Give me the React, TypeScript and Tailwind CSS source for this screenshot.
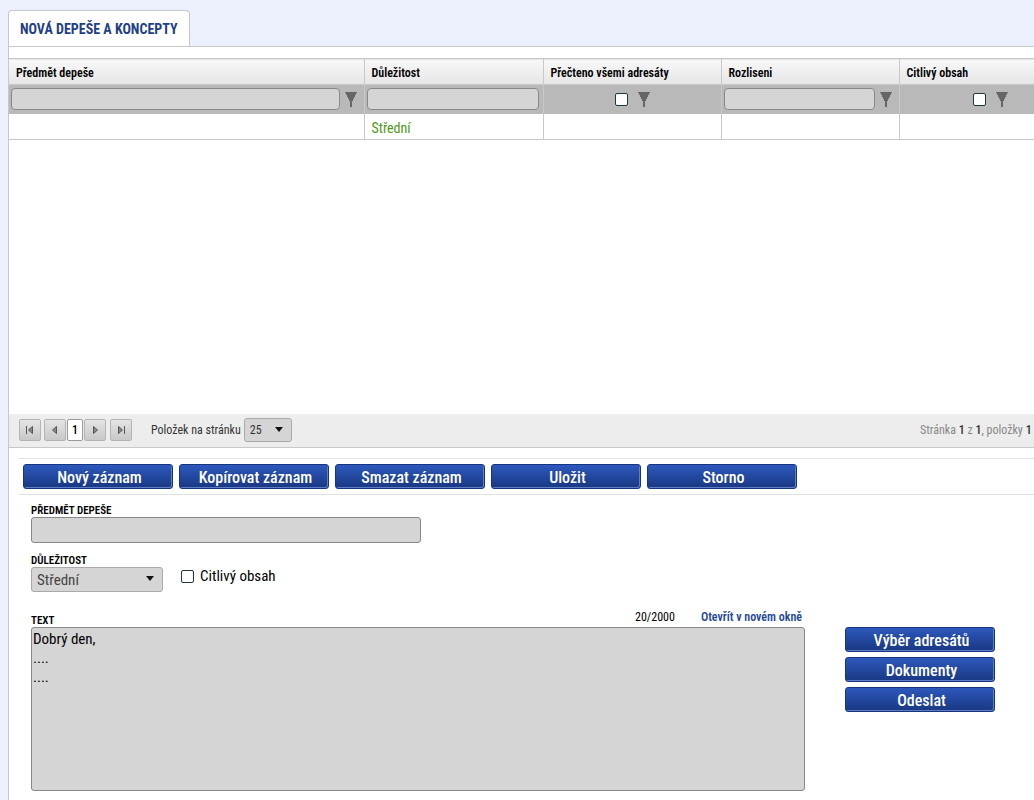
import { useState } from "react";
import type { ReactNode } from "react";

function FilterIcon({ label }: { label: string }) {
  return (
    <button type="button" aria-label={label} className="shrink-0 cursor-pointer">
      <svg width="12" height="15" viewBox="0 0 12 15" fill="#666" shapeRendering="crispEdges" aria-hidden="true">
        <path d="M0 0h12v1h-1v2h-1v2H9v2H8v2H7v6H5V9H4V7H3V5H2V3H1V1H0z" />
      </svg>
    </button>
  );
}

function Check({ id, label }: { id?: string; label?: string }) {
  return (
    <input
      id={id}
      aria-label={label}
      type="checkbox"
      className="size-[13px] shrink-0 appearance-none rounded-[2px] border border-[#1d3740] bg-white checked:bg-[#1f4297]"
    />
  );
}

function ActionButton({ children }: { children: ReactNode }) {
  return (
    <button
      type="button"
      className="h-[25px] w-[150px] cursor-pointer rounded-[3px] border border-[#17357f] bg-linear-to-b from-[#2d58bd] to-[#193883] pt-0.5 pl-[3px] text-center text-base leading-[21px] font-medium text-white shadow-[inset_-1px_-1px_0_#5f7dc4]"
    >
      {children}
    </button>
  );
}

function PagerButton({ label, path, bar }: { label: string; path: string; bar?: string }) {
  return (
    <button
      type="button"
      aria-label={label}
      className="flex size-[22px] items-center justify-center rounded-[2px] border border-[#b4b4b4] bg-linear-to-b from-[#e4e4e4] to-[#c8c8c8]"
    >
      <svg width="10" height="10" viewBox="0 0 10 10" aria-hidden="true">
        <path d={path} fill="#888" stroke="#555" strokeWidth="1" />
        {bar && <path d={bar} stroke="#555" strokeWidth="1" />}
      </svg>
    </button>
  );
}

function Caret() {
  return (
    <svg width="8" height="5" viewBox="0 0 8 5" fill="#111" aria-hidden="true" className="pointer-events-none col-start-1 row-start-1 mr-[9px] mb-0.5 self-center justify-self-end">
      <path d="M0 0h8L4 5z" />
    </svg>
  );
}

const columns = ["Předmět depeše", "Důležitost", "Přečteno všemi adresáty", "Rozliseni", "Citlivý obsah"];
const filterInput = "h-[22px] w-full min-w-0 rounded-[4px] border border-[#888] bg-[#d5d5d5] px-1 text-sm";
const fieldLabel = "block pt-px text-[11px] leading-[13px] font-semibold text-black uppercase";

export default function App() {
  const [text, setText] = useState("Dobrý den,\n....\n....");

  return (
    <div className="min-h-screen overflow-x-hidden bg-[#ecf0fc] pt-2.5 pl-2 font-['Roboto_Condensed','Roboto',sans-serif] text-sm text-black">
      <div role="tablist" className="flex">
        <button
          type="button"
          role="tab"
          aria-selected="true"
          className="h-9 rounded-t-[4px] border border-b-0 border-[#c8c8c8] bg-white px-[11px] pt-px text-sm leading-[34px] font-bold text-[#1f3f87] uppercase"
        >
          Nová depeše a koncepty
        </button>
      </div>

      <main className="min-h-[calc(100vh-46px)] overflow-hidden border-t border-l border-[#c8c8c8] bg-white pt-[11px]">
        <div className="min-w-[1073px]">
          <div className="min-h-[356px]">
            <table className="w-full table-fixed border-collapse">
              <colgroup>
                <col className="w-[355px]" />
                <col className="w-[179px]" />
                <col className="w-[178px]" />
                <col className="w-[178px]" />
                <col />
              </colgroup>
              <thead>
                <tr className="h-[26px] border-y border-[#c8c8c8] bg-linear-to-b from-[#f8f8f8] to-[#e6e6e6]">
                  {columns.map((c) => (
                    <th key={c} scope="col" className="border-r border-[#c8c8c8] px-[7px] pt-0.5 text-left text-xs leading-4 font-semibold">
                      {c}
                    </th>
                  ))}
                </tr>
                <tr className="h-[29px] bg-[#b9b9b9]">
                  <td className="border-r border-[#c8c8c8] pr-[7px] pl-0.5">
                    <div className="flex items-center gap-[5px]">
                      <input aria-label="Filtr Předmět depeše" className={filterInput} />
                      <FilterIcon label="Filtrovat předmět" />
                    </div>
                  </td>
                  <td className="border-r border-[#c8c8c8] pr-1 pl-0.5">
                    <div className="flex">
                      <input aria-label="Filtr Důležitost" className={filterInput} />
                    </div>
                  </td>
                  <td className="border-r border-[#c8c8c8] pl-px">
                    <div className="flex items-center justify-center gap-2.5">
                      <Check label="Přečteno všemi adresáty" />
                      <FilterIcon label="Filtrovat přečtené" />
                    </div>
                  </td>
                  <td className="border-r border-[#c8c8c8] pr-[7px] pl-0.5">
                    <div className="flex items-center gap-[5px]">
                      <input aria-label="Filtr Rozliseni" className={filterInput} />
                      <FilterIcon label="Filtrovat rozlišení" />
                    </div>
                  </td>
                  <td className="border-r border-[#c8c8c8] pl-px">
                    <div className="flex items-center justify-center gap-2.5">
                      <Check label="Citlivý obsah" />
                      <FilterIcon label="Filtrovat citlivý obsah" />
                    </div>
                  </td>
                </tr>
              </thead>
              <tbody>
                <tr className="h-[26px] border-b border-[#c8c8c8]">
                  <td className="border-r border-[#c8c8c8]" />
                  <td className="border-r border-[#c8c8c8] px-[7px] pt-1 leading-5 text-[#4d9a1a]">Střední</td>
                  <td className="border-r border-[#c8c8c8]" />
                  <td className="border-r border-[#c8c8c8]" />
                  <td className="border-r border-[#c8c8c8]" />
                </tr>
              </tbody>
            </table>
          </div>

          <div className="flex h-[34px] items-center border-b border-[#c8c8c8] bg-[#ededed] pr-2.5 pb-px pl-2.5 text-xs text-[#333]">
            <nav aria-label="Stránkování" className="flex items-center">
              <PagerButton label="První stránka" path="M7.5 1.5v7L3.5 5z" bar="M1.5 1v8" />
              <span className="w-[3px]" />
              <PagerButton label="Předchozí stránka" path="M6.5 1.5v7L2.5 5z" />
              <button type="button" aria-current="page" className="mx-px h-[22px] w-4 rounded-[2px] border border-[#999] bg-white text-center font-medium text-black">
                1
              </button>
              <PagerButton label="Další stránka" path="M3.5 1.5v7L7.5 5z" />
              <span className="w-1" />
              <PagerButton label="Poslední stránka" path="M2.5 1.5v7L6.5 5z" bar="M8.5 1v8" />
            </nav>
            <label htmlFor="page-size" className="ml-[19px]">Položek na stránku</label>
            <div className="ml-[3px] grid">
              <select id="page-size" defaultValue="25" className="col-start-1 row-start-1 h-6 w-12 appearance-none rounded-[3px] border border-[#aaa] bg-[#d5d5d5] pl-[5px] text-xs">
                <option>25</option>
                <option>50</option>
              </select>
              <Caret />
            </div>
            <p className="ml-auto w-[152px] whitespace-nowrap text-[#888]">
              Stránka <b className="font-medium text-[#333]">1</b> z <b className="font-medium text-[#333]">1</b>, položky{" "}
              <b className="font-medium text-[#333]">1</b> až 1 z 1
            </p>
          </div>
        </div>

        <div className="mt-2.5 ml-2.5 flex gap-1.5 border-y border-[#e2e2e2] px-1 py-[5px]">
          <ActionButton>Nový záznam</ActionButton>
          <ActionButton>Kopírovat záznam</ActionButton>
          <ActionButton>Smazat záznam</ActionButton>
          <ActionButton>Uložit</ActionButton>
          <ActionButton>Storno</ActionButton>
        </div>

        <form className="px-[22px] pt-2" onSubmit={(e) => e.preventDefault()}>
          <label htmlFor="subject" className={fieldLabel}>Předmět depeše</label>
          <input id="subject" className="block h-[26px] w-[390px] rounded-[3px] border border-[#888] bg-[#d5d5d5] px-1 text-base" />

          <div className="mt-2.5 flex items-start">
            <div>
              <label htmlFor="priority" className={fieldLabel}>Důležitost</label>
              <div className="grid">
                <select id="priority" defaultValue="Střední" className="col-start-1 row-start-1 h-[25px] w-[132px] appearance-none rounded-[3px] border border-[#aaa] bg-[#d5d5d5] pt-0.5 pl-[5px] text-[15px] text-[#444]">
                  <option>Nízká</option>
                  <option>Střední</option>
                  <option>Vysoká</option>
                </select>
                <Caret />
              </div>
            </div>
            <div className="mt-3.5 ml-[18px] flex items-center gap-1.5">
              <Check id="sensitive" />
              <label htmlFor="sensitive" className="text-[15px] leading-[18px]">Citlivý obsah</label>
            </div>
          </div>

          <div className="mt-[17px] flex items-start gap-10">
            <div className="w-[774px]">
              <div className="flex items-end text-xs leading-4">
                <label htmlFor="message" className={fieldLabel}>Text</label>
                <span className="ml-auto pb-0.5">20/2000</span>
                <a href="#message" className="mr-[3px] ml-[26px] pb-0.5 font-semibold text-[#1f4a94]">Otevřít v novém okně</a>
              </div>
              <textarea
                id="message"
                value={text}
                onChange={(e) => setText(e.target.value)}
                className="block h-[164px] w-full resize-none rounded-[3px] border border-[#888] bg-[#d5d5d5] px-px pt-0.5 text-[15px] leading-[19px]"
              />
            </div>
            <div className="mt-[18px] flex flex-col gap-[5px]">
              <ActionButton>Výběr adresátů</ActionButton>
              <ActionButton>Dokumenty</ActionButton>
              <ActionButton>Odeslat</ActionButton>
            </div>
          </div>
        </form>
      </main>
    </div>
  );
}
